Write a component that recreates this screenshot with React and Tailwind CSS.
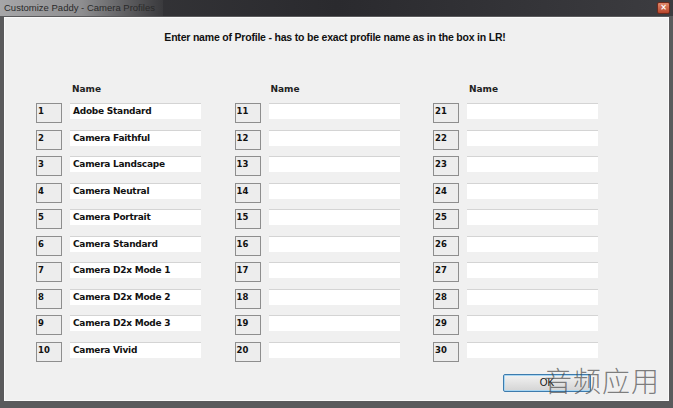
import React from 'react';

const COL_A = [
  'Adobe Standard',
  'Camera Faithful',
  'Camera Landscape',
  'Camera Neutral',
  'Camera Portrait',
  'Camera Standard',
  'Camera D2x Mode 1',
  'Camera D2x Mode 2',
  'Camera D2x Mode 3',
  'Camera Vivid',
];

const COLUMNS = [0, 1, 2].map((c) =>
  Array.from({ length: 10 }, (_, i) => ({
    n: c * 10 + i + 1,
    value: c === 0 ? COL_A[i] : '',
  }))
);

const VERDANA = { fontFamily: '"DejaVu Sans", Verdana, sans-serif' };

function ProfileRow({ n, value }) {
  return (
    <div className="flex items-start gap-[8px] h-[20px]">
      <div className="w-[26px] h-[20px] border border-[#8e8e8e] bg-[#ededed] pl-[1px] pt-[2px] text-[8.5px] font-bold leading-[10px] text-[#111]">
        {n}
      </div>
      <div className="w-[131px] h-[16px] bg-white border-t border-[#d4d4d4] pl-[3px] text-[9px] font-bold leading-[15px] text-[#111] tracking-[-0.25px] whitespace-nowrap">
        {value}
      </div>
    </div>
  );
}

function ProfileColumn({ rows }) {
  return (
    <div className="flex flex-col w-[165px]">
      <div className="pl-[36px] h-[12px] text-[9px] font-bold leading-[12px] text-[#222]">Name</div>
      <div className="flex flex-col gap-[6.5px] mt-[8px]">
        {rows.map((r) => (
          <ProfileRow key={r.n} {...r} />
        ))}
      </div>
    </div>
  );
}

export default function App() {
  return (
    <div className="relative w-[673px] h-[408px] flex flex-col bg-[#5a5a5c] overflow-hidden" style={VERDANA}>
      {/* title bar */}
      <div className="h-[16px] flex items-center justify-between bg-gradient-to-r from-[#3a3a3d] via-[#2a2a2e] to-[#3c3c40]">
        <div className="h-full flex items-center pl-[4px] pr-[8px] bg-gradient-to-r from-[#a6a6a8] via-[#8e8e90] to-[#3a3a3d]">
          <span
            className="text-[9.5px] leading-none text-[#2a2a2a] whitespace-nowrap"
            style={{ fontFamily: '"Liberation Sans", Arial, sans-serif' }}
          >
            Customize Paddy - Camera Profiles
          </span>
        </div>
        <div className="mr-[3px] w-[13px] h-[12px] rounded-[2px] bg-gradient-to-b from-[#e0876a] to-[#b8442a] border border-[#6e2a1c] flex items-center justify-center text-[8px] leading-none text-white font-bold">
          ×
        </div>
      </div>

      {/* client area */}
      <div className="flex-1 mx-[4px] mt-[1px] mb-[7px] bg-[#f0f0f0] border border-[#fafafa] flex flex-col">
        <div
          className="pt-[13px] h-[25px] text-center pr-[3px] text-[10.5px] font-bold leading-[12px] text-[#111] tracking-[-0.2px]"
          style={{ fontFamily: '"Liberation Sans", Tahoma, sans-serif' }}
        >
          Enter name of Profile - has to be exact profile name as in the box in LR!
        </div>

        <div className="flex gap-x-[33.5px] pl-[31px] mt-[40px]">
          {COLUMNS.map((rows, i) => (
            <ProfileColumn key={i} rows={rows} />
          ))}
        </div>

        <div className="flex pl-[498px] mt-[12px]">
          <div
            className="w-[88px] h-[18px] rounded-[2px] border border-[#3d7bad] bg-gradient-to-b from-[#f2f2f2] to-[#d4d4d4] shadow-[inset_0_0_0_1px_#a9d6f2] flex items-center justify-center text-[10px] text-[#111]"
            style={{ fontFamily: '"Liberation Sans", Tahoma, sans-serif' }}
          >
            OK
          </div>
        </div>
      </div>

      {/* watermark */}
      <div
        className="absolute left-[544px] top-[364px] text-[28px] leading-[32px] font-light text-[#4a4a4a]/70 tracking-[1px]"
        style={{ fontFamily: '"Noto Sans CJK SC", sans-serif' }}
      >
        音频应用
      </div>
    </div>
  );
}
